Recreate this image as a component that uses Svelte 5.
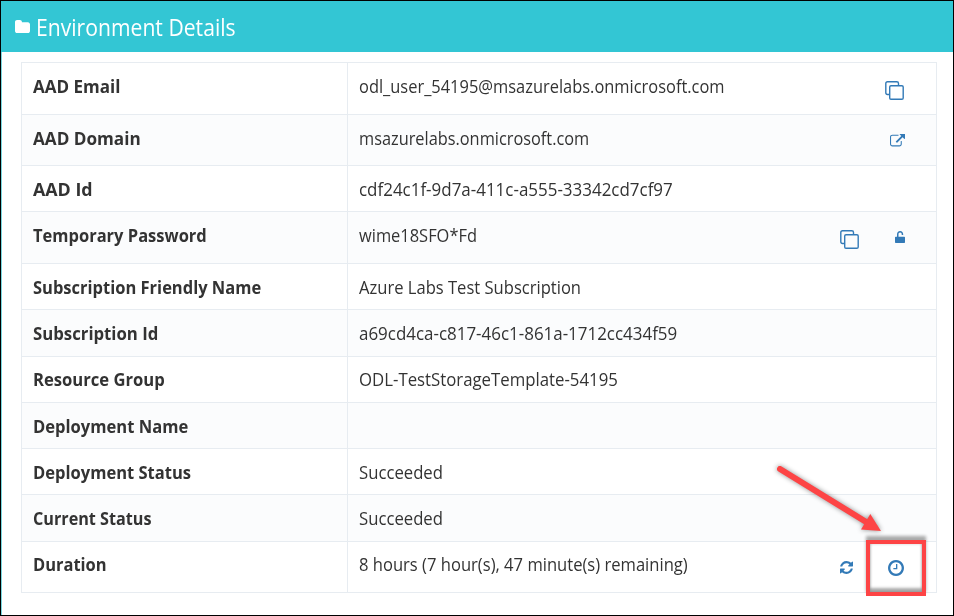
<script>
  const icons = {
    copy: { box: '0 0 19 19', w: 19, h: 19 },
    external: {
      box: '0 64 1792 1472', w: 15, h: 12.5,
      d: 'M1408 928v320q0 119-84.500 203.500t-203.500 84.500h-832q-119 0-203.500-84.500t-84.500-203.500v-832q0-119 84.500-203.500t203.500-84.500h704q14 0 23 9t9 23v64q0 14-9 23t-23 9h-704q-66 0-113 47t-47 113v832q0 66 47 113t113 47h832q66 0 113-47t47-113v-320q0-14 9-23t23-9h64q14 0 23 9t9 23zm384-864v512q0 26-19 45t-45 19-45-19l-176-176-652 652q-10 10-23 10t-23-10l-114-114q-10-10-10-23t10-23l652-652-176-176q-19-19-19-45t19-45 45-19h512q26 0 45 19t19 45z'
    },
    unlock: {
      box: '0 0 10 12', w: 10, h: 12,
      d: 'M.7 5.700H2V3.500C2 1.500 3.200 0 5.100 0S8.200 1.400 8.200 3.200V3.900H6.700V3.300C6.700 2.200 6.100 1.500 5.100 1.500S3.500 2.200 3.500 3.400V5.700H9.300Q10 5.700 10 6.400V11.300Q10 12 9.300 12H.7Q0 12 0 11.300V6.400Q0 5.700.7 5.700z'
    },
    refresh: {
      box: '128 128 1536 1536', w: 13, h: 13,
      d: 'M1639 1056q0 5-1 7-64 268-268 434.500t-478 166.500q-146 0-282.500-55t-243.500-157l-129 129q-19 19-45 19t-45-19-19-45v-448q0-26 19-45t45-19h448q26 0 45 19t19 45-19 45l-137 137q71 66 161 102t187 36q134 0 250-65t186-179q11-17 53-117 8-23 30-23h192q13 0 22.500 9.500t9.500 22.500zm25-800v448q0 26-19 45t-45 19h-448q-26 0-45-19t-19-45 19-45l138-138q-148-137-349-137-134 0-250 65t-186 179q-11 17-53 117-8 23-30 23h-199q-13 0-22.500-9.500t-9.500-22.500v-7q65-268 270-434.500t480-166.500q146 0 284 55.500t245 156.500l130-129q19-19 45-19t45 19 19 45z'
    },
    clock: {
      box: '128 128 1536 1536', w: 16, h: 16,
      d: 'M1024 544v448q0 14-9 23t-23 9h-320q-14 0-23-9t-9-23v-64q0-14 9-23t23-9h224v-352q0-14 9-23t23-9h64q14 0 23 9t9 23zm416 352q0-148-73-273t-198-198-273-73-273 73-198 198-73 273 73 273 198 198 273 73 273-73 198-198 73-273zm224 0q0 209-103 385.500t-279.500 279.500-385.500 103-385.500-103-279.500-279.500-103-385.500 103-385.500 279.500-279.500 385.500-103 385.500 103 279.500 279.500 103 385.500z'
    }
  };

  // h: row height, lw / vw: set widths of the label and the value
  const rows = [
    { h: 52, label: 'AAD Email', lw: 87.5, value: 'odl_user_54195@msazurelabs.onmicrosoft.com', vw: 366, actions: [{ icon: 'copy', top: 18, right: 32 }] },
    { h: 51, label: 'AAD Domain', lw: 107.5, value: 'msazurelabs.onmicrosoft.com', vw: 230, actions: [{ icon: 'external', top: 19, right: 31 }] },
    { h: 46, label: 'AAD Id', lw: 59.5, value: 'cdf24c1f-9d7a-411c-a555-33342cd7cf97', vw: 313.5 },
    { h: 52, label: 'Temporary Password', lw: 173.5, value: 'wime18SFO*Fd', vw: 118, actions: [{ icon: 'copy', top: 18, right: 36 }, { icon: 'unlock', top: 19, right: 31 }] },
    { h: 46, label: 'Subscription Friendly Name', lw: 228.5, value: 'Azure Labs Test Subscription', vw: 222 },
    { h: 47, label: 'Subscription Id', lw: 125, value: 'a69cd4ca-c817-46c1-861a-1712cc434f59', vw: 318 },
    { h: 46, label: 'Resource Group', lw: 131.5, value: 'ODL-TestStorageTemplate-54195', vw: 259, lift: 1 },
    { h: 46, label: 'Deployment Name', lw: 155.5, value: '', vw: 0 },
    { h: 46, label: 'Deployment Status', lw: 158, value: 'Succeeded', vw: 84 },
    { h: 47, label: 'Current Status', lw: 119, value: 'Succeeded', vw: 84 },
    { h: 51, label: 'Duration', lw: 73.5, value: '8 hours (7 hour(s), 47 minute(s) remaining)', vw: 329, lift: 1, actions: [{ icon: 'refresh', top: 19, right: 35 }, { icon: 'clock', top: 18, right: 32 }] }
  ];

  // Condenses the text horizontally so that it fills the given width
  function fit(node, width) {
    const apply = () => {
      if (width) node.style.transform = `scaleX(${width / node.offsetWidth})`;
    };
    apply();
    document.fonts.ready.then(apply);
  }
</script>

<main class="panel">
  <header class="heading">
    <svg class="folder" viewBox="64 128 1664 1408" preserveAspectRatio="none"><path d="M1728 608v704q0 92-66 158t-158 66h-1216q-92 0-158-66t-66-158v-960q0-92 66-158t158-66h320q92 0 158 66t66 158v32h672q92 0 158 66t66 158z" /></svg>
    <h1><span class="fit" use:fit={199.5}>Environment Details</span></h1>
  </header>

  <div class="table">
    {#each rows as row}
      <div class="row" style:height="{row.h}px" style:line-height="{24 - 2 * (row.lift ?? 0)}px">
        <div class="label"><span class="fit" use:fit={row.lw}>{row.label}</span></div>
        <div class="value">
          <span class="fit" use:fit={row.vw}>{row.value}</span>
          {#if row.actions}
            <div class="actions">
              {#each row.actions as a}
                {@const icon = icons[a.icon]}
                <svg class="icon" viewBox={icon.box} width={icon.w} height={icon.h} style:margin="{a.top}px {a.right}px 0 0">
                  {#if a.icon === 'copy'}
                    <path class="line" d="M4.500 13.500H2.500Q.8 13.500.8 11.800V2.500Q.8.8 2.500.8H11.800Q13.500.8 13.500 2.500V4.500" />
                    <rect class="line" x="4.700" y="4.700" width="13.500" height="13.500" rx="1.300" />
                  {:else}
                    <path d={icon.d} />
                  {/if}
                </svg>
              {/each}
            </div>
          {/if}
        </div>
      </div>
    {/each}
  </div>

  <div class="callout"></div>
  <svg class="arrow" viewBox="0 0 120 80" width="120" height="80">
    <path class="shaft" d="M11 9L98 62.500" />
    <path class="head" d="M101.300 54L112 71L92 69.500z" />
  </svg>
</main>

<style>
  .panel {
    position: relative;
    box-sizing: border-box;
    width: 954px;
    height: 616px;
    overflow: hidden;
    border: 1px solid #000;
    background: #fff;
    box-shadow: inset 1px 0 #78d7df;
    color: #333;
    font-family: 'Open Sans', 'Noto Sans', sans-serif;
  }
  .heading {
    display: flex;
    align-items: center;
    box-sizing: border-box;
    height: 51px;
    padding-left: 14px;
    background: #33c6d4;
    color: #fff;
  }
  .folder {
    width: 15px;
    height: 13px;
    margin-right: 5.500px;
    fill: #fff;
  }
  h1 {
    margin: 0;
    font-size: 23px;
    font-weight: 400;
    line-height: 53px;
    white-space: nowrap;
  }
  h1 .fit {
    padding-top: 1px;
  }
  .fit {
    display: inline-block;
    transform-origin: 0 50%;
  }
  .table {
    width: 914px;
    margin: 10px 0 0 20px;
    border: solid #e7ecf1;
    border-width: 0 1px 1px;
  }
  .row {
    display: flex;
    box-sizing: border-box;
    border-top: 1px solid #e7ecf1;
    font-size: 17.700px;
    white-space: nowrap;
  }
  .row:nth-child(even) {
    background: #fbfcfd;
  }
  .label {
    box-sizing: border-box;
    width: 326px;
    padding: 11px 10px 0 10.500px;
    border-right: 1px solid #e7ecf1;
    font-weight: 700;
  }
  .value {
    display: flex;
    flex: 1;
    justify-content: space-between;
    padding-left: 10.500px;
  }
  .value > span {
    align-self: flex-start;
    margin-top: 11px;
  }
  .actions {
    display: flex;
    align-items: flex-start;
  }
  .icon {
    fill: #337ab7;
  }
  .line {
    fill: none;
    stroke: #337ab7;
    stroke-width: 1.400;
  }
  .callout {
    position: absolute;
    left: 865px;
    top: 539px;
    box-sizing: border-box;
    width: 60px;
    height: 56px;
    border: 4px solid #fd4445;
    box-shadow: 0 -4px 3px rgba(0, 0, 0, 0.33), inset 0 -4px 3px rgba(0, 0, 0, 0.33), inset 0 0 3px rgba(0, 0, 0, 0.2);
  }
  .arrow {
    position: absolute;
    left: 768px;
    top: 459px;
    filter: drop-shadow(0 0 2.500px rgba(0, 0, 0, 0.45));
  }
  .shaft {
    fill: none;
    stroke: #fd4445;
    stroke-width: 6;
    stroke-linecap: round;
  }
  .head {
    fill: #fd4445;
  }
</style>
